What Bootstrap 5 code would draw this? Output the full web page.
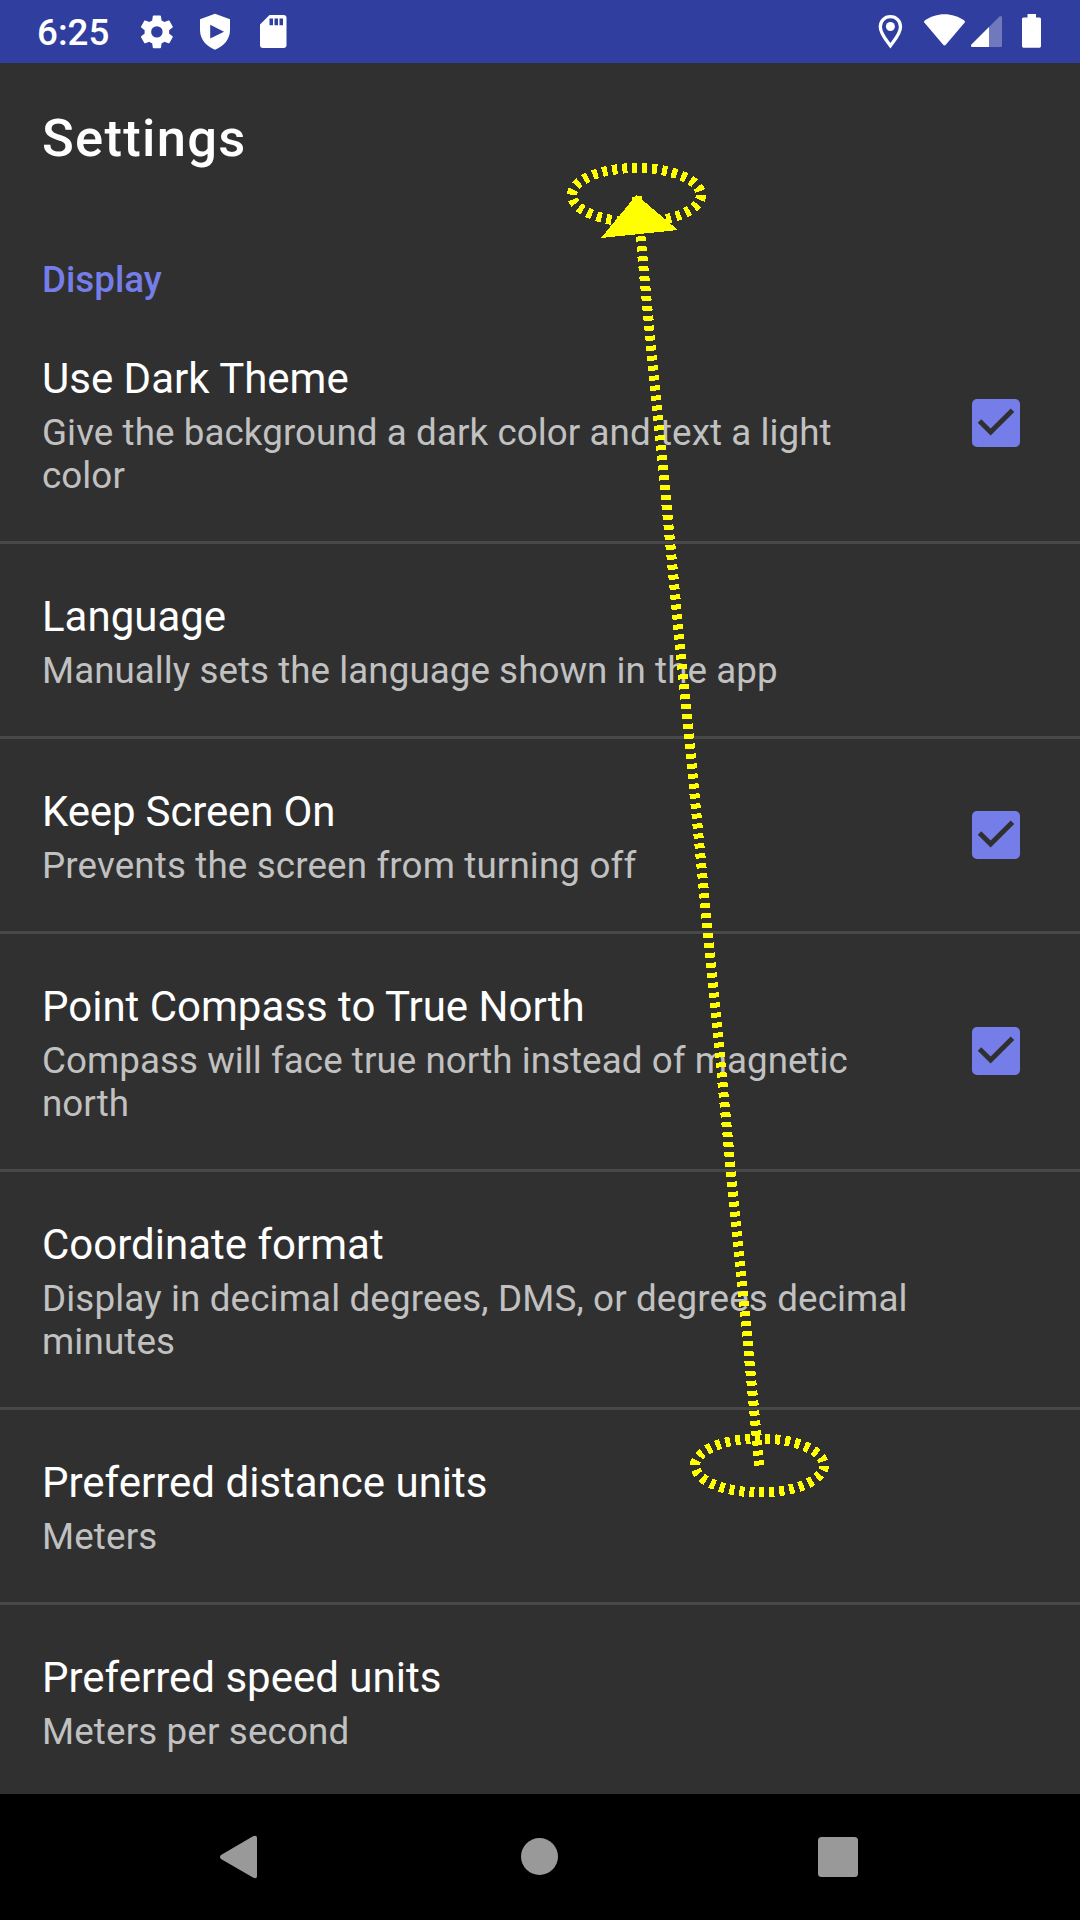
<!DOCTYPE html>
<html lang="en" data-bs-theme="dark">
<head>
<meta charset="utf-8">
<meta name="viewport" content="width=device-width, initial-scale=1">
<title>Settings</title>
<link href="https://cdn.jsdelivr.net/npm/bootstrap@5.3.0/dist/css/bootstrap.min.css" rel="stylesheet">
<style>
body{background:#303030;font-family:Roboto,sans-serif;color:#fff}
.screen{width:1080px;height:1920px}
.statusbar{height:63px;background:#303f9f;flex:none}
.clock{font-size:36.75px;font-weight:500;line-height:43px;padding:11px 0 0 37px;width:140px}
.page-title{font-size:52.5px;font-weight:500;line-height:62px;letter-spacing:1.3px;padding:44px 42px 0;height:194px}
.section-title{font-size:36.75px;font-weight:500;line-height:43px;color:#757de8;padding:1px 42px 0;height:49px}
.pref{padding:48px 0 44px 42px;border-bottom:3px solid #484848}
.pref-title{font-size:42px;line-height:49px;margin-bottom:8px}
.pref-summary{font-size:36.75px;line-height:43px;color:#c1c1c1;letter-spacing:.05px}
.pref-summary.loose{letter-spacing:.14px}
.pref-summary.medium{letter-spacing:.08px}
.title-tight{letter-spacing:-.15px}
.pref-text{padding-right:60px}
.pref-check{width:108px;flex:none;margin:-48px 0 -44px}
.tall .pref-check{margin-bottom:-43px}
.navbar-sys{height:126px;background:#000;flex:none}
.gesture{pointer-events:none}
</style>
<script src="https://cdn.jsdelivr.net/npm/bootstrap@5.3.0/dist/js/bootstrap.bundle.min.js"></script>
</head>
<body>
<svg width="0" height="0" class="position-absolute">
  <symbol id="checked" viewBox="0 0 48 48"><rect width="48" height="48" rx="5" fill="#757de8"/><path d="M7.500 22 18.600 33 40.500 11.200" fill="none" stroke="#303030" stroke-width="5"/></symbol>
</svg>
<div class="screen d-flex flex-column position-relative overflow-hidden">
  <header class="statusbar d-flex">
    <div class="clock">6:25</div>
    <svg width="160" height="63" viewBox="140 0 160 63" fill="#fff">
      <g transform="translate(137.200 12.200) scale(1.640)"><path d="M19.430 12.980c.04-.32.07-.64.07-.98s-.03-.66-.07-.98l2.110-1.650c.19-.15.24-.42.12-.64l-2-3.460c-.12-.22-.39-.3-.61-.22l-2.490 1c-.52-.4-1.080-.73-1.690-.98l-.38-2.650C14.460 2.180 14.250 2 14 2h-4c-.25 0-.46.18-.49.42l-.38 2.650c-.61.25-1.170.59-1.690.98l-2.490-1c-.23-.09-.49 0-.61.22l-2 3.460c-.13.22-.07.49.12.64l2.110 1.650c-.04.32-.07.65-.07.98s.03.66.07.98l-2.110 1.650c-.19.15-.24.42-.12.64l2 3.460c.12.22.39.3.61.22l2.490-1c.52.4 1.080.73 1.690.98l.38 2.650c.03.24.24.42.49.42h4c.25 0 .46-.18.49-.42l.38-2.650c.61-.25 1.170-.59 1.690-.98l2.490 1c.23.09.49 0 .61-.22l2-3.460c.12-.22.07-.49-.12-.64zM12 15.500a3.500 3.500 0 1 1 0-7 3.500 3.500 0 0 1 0 7z"/></g>
      <path fill-rule="evenodd" d="M215 13.700 200 19.300V30c0 9.300 6.500 16.500 15 19.700 8.500-3.200 15-10.400 15-19.700V19.300zM210.200 24.800 224 31.700 210.200 38.600z"/>
      <path fill-rule="evenodd" d="M269.500 15H283.500a3 3 0 0 1 3 3V45a3 3 0 0 1-3 3H263a3 3 0 0 1-3-3V24.500zM269.500 18.500V25.300H273V18.500zM274.500 18.500V25.300H278V18.500zM279.500 18.500V25.300H283V18.500z"/>
    </svg>
    <svg class="ms-auto" width="240" height="63" viewBox="840 0 240 63" fill="#fff">
      <path d="M890.400 16.600c-5.900 0-10.100 4.500-10.100 10.100 0 7.200 6.700 14.200 10.100 19 3.400-4.800 10.100-11.800 10.100-19 0-5.600-4.200-10.100-10.100-10.100z" fill="none" stroke="#fff" stroke-width="3.300"/>
      <circle cx="890.400" cy="26.500" r="4.500"/>
      <path d="M924.500 20.800C936 12 953 12 964.500 20.800Q965.400 21.700 964.700 22.600L945.800 44.800Q944.500 46 943.200 44.800L924.300 22.600Q923.700 21.600 924.500 20.800z"/>
      <path d="M971.500 44.500 999.500 16.500Q1002 15 1002 17.500V45.500Q1002 47 1000.500 47H972.500Q970 46.500 971.500 44.500z" fill="#7079bb"/>
      <path d="M971.500 44.500 989 27V47H972.500Q970 46.500 971.500 44.500z"/>
      <path d="M1027.500 14H1036V17.500H1039.500Q1041 17.500 1041 19V46Q1041 47.700 1039.500 47.700H1023.500Q1022 47.700 1022 46V19Q1022 17.500 1023.500 17.500H1027.500z"/>
    </svg>
  </header>
  <main class="flex-grow-1 overflow-hidden">
    <h1 class="page-title m-0">Settings</h1>
    <h2 class="section-title m-0">Display</h2>
    <div class="pref tall d-flex align-items-center">
      <div class="pref-text flex-grow-1"><div class="pref-title">Use Dark Theme</div><div class="pref-summary medium">Give the background a dark color and text a light color</div></div>
      <div class="pref-check"><svg class="d-block" width="48" height="48"><use href="#checked"/></svg></div>
    </div>
    <div class="pref">
      <div class="pref-text"><div class="pref-title">Language</div><div class="pref-summary">Manually sets the language shown in the app</div></div>
    </div>
    <div class="pref d-flex align-items-center">
      <div class="pref-text flex-grow-1"><div class="pref-title title-tight">Keep Screen On</div><div class="pref-summary loose">Prevents the screen from turning off</div></div>
      <div class="pref-check"><svg class="d-block" width="48" height="48"><use href="#checked"/></svg></div>
    </div>
    <div class="pref tall d-flex align-items-center">
      <div class="pref-text flex-grow-1"><div class="pref-title">Point Compass to True North</div><div class="pref-summary">Compass will face true north instead of magnetic north</div></div>
      <div class="pref-check"><svg class="d-block" width="48" height="48"><use href="#checked"/></svg></div>
    </div>
    <div class="pref">
      <div class="pref-text"><div class="pref-title">Coordinate format</div><div class="pref-summary loose">Display in decimal degrees, DMS, or degrees decimal minutes</div></div>
    </div>
    <div class="pref">
      <div class="pref-text"><div class="pref-title">Preferred distance units</div><div class="pref-summary loose">Meters</div></div>
    </div>
    <div class="pref border-0">
      <div class="pref-text"><div class="pref-title">Preferred speed units</div><div class="pref-summary loose">Meters per second</div></div>
    </div>
  </main>
  <footer class="navbar-sys">
    <svg width="1080" height="126" viewBox="0 1794 1080 126" fill="#999">
      <path d="M253 1836.200Q257 1834.500 257 1838V1876Q257 1879.500 253 1877.500L221 1859Q219 1857 221 1855z"/>
      <circle cx="539.500" cy="1856.500" r="18.500"/>
      <rect x="818" y="1837" width="40" height="40" rx="3.500"/>
    </svg>
  </footer>
  <svg class="gesture position-absolute top-0 start-0" width="1080" height="1920" fill="none" stroke="#ff0" stroke-width="10" stroke-dasharray="5 5" shape-rendering="crispEdges">
    <ellipse cx="636.500" cy="195" rx="64.500" ry="27"/>
    <ellipse cx="759.500" cy="1465.500" rx="64.500" ry="27"/>
    <path d="M759.500 1465.500 636.500 195.500"/>
    <path d="M636.500 195 678 230 601 238z" fill="#ff0" stroke="none"/>
  </svg>
</div>
</body>
</html>
